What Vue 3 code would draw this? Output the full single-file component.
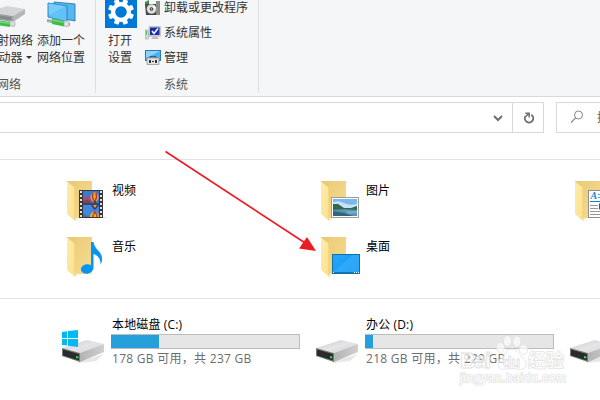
<template>
  <div class="explorer">
    <header class="ribbon">
      <section class="group network">
        <div class="buttons">
          <div class="big-button">
            <svg class="big-icon" viewBox="0 0 48 28">
              <path d="M3 12L22 6L40 9L28 16L8 13Z" fill="#d3d5d7" />
              <path d="M3 12L28 16V22L3 18Z" fill="#9a9da0" />
              <path d="M28 16L40 9V14L28 22Z" fill="#b3b6b8" />
              <path d="M5 14L26 17.500V20L5 16.500Z" fill="#808487" />
              <path d="M5 22.500L30 25" stroke="#a5a9aa" stroke-width="3" />
              <path d="M12 20L25 22V27L12 25Z" fill="#43bd50" />
              <path d="M12 21.500L25 23.500" stroke="#82dc86" stroke-width="1.200" />
              <rect x="25" y="21" width="5" height="5" rx="1" fill="#d5dbdc" stroke="#aaa" stroke-width=".5" />
            </svg>
            <span>映射网络</span>
            <span>驱动器<i class="caret"></i></span>
          </div>
          <div class="big-button">
            <svg class="big-icon" viewBox="0 0 48 28">
              <path d="M17 2L38 4V21L17 17Z" fill="#56b7ee" stroke="#237bb5" stroke-width=".9" />
              <path d="M11 3L30 6V22L11 17Z" fill="#62c2f8" stroke="#237ebb" stroke-width=".9" />
              <path d="M11.500 3.500L29 6L12 15Z" fill="#95daff" opacity=".45" />
              <path d="M10 20.500L33 24.500" stroke="#a0aaab" stroke-width="3" />
              <path d="M15 18.500L27 20.500V26.500L15 24Z" fill="#42ba4c" />
              <path d="M15.500 20L27 22.300" stroke="#7bd77e" stroke-width="1.300" />
              <rect x="27" y="21" width="5" height="5.500" rx="1" fill="#dce2e2" stroke="#9da5a6" stroke-width=".6" />
            </svg>
            <span>添加一个</span>
            <span>网络位置</span>
          </div>
        </div>
        <div class="group-title">网络</div>
      </section>

      <section class="group system">
        <div class="buttons">
          <div class="big-button settings">
            <svg class="settings-icon" viewBox="0 0 32 28">
              <rect width="32" height="28" fill="#0078d7" />
              <g transform="translate(16 12)" fill="#fff">
                <rect v-for="n in 8" :key="n" x="-2.500" y="-13" width="5" height="6" rx="1" :transform="`rotate(${n * 45 + 22.500})`" />
                <circle r="7.900" fill="none" stroke="#fff" stroke-width="4.200" />
              </g>
            </svg>
            <span>打开</span>
            <span>设置</span>
          </div>
          <ul class="commands">
            <li>
              <svg class="small-icon" viewBox="0 0 16 16">
                <path d="M0 2L4 0V5H0Z" fill="#3a8f50" />
                <path d="M0 4H12V15H1Z" fill="#444" />
                <path d="M11 1H15V15H11Z" fill="#8c8c8c" />
                <circle cx="6.500" cy="9" r="4.800" fill="#ddd" />
                <path d="M6.500 9L9 5L11 8Z" fill="#fff" />
                <circle cx="6.500" cy="9" r="1.800" fill="#333" />
                <circle cx="6.500" cy="9" r=".8" fill="#ddd" />
              </svg>
              卸载或更改程序
            </li>
            <li>
              <svg class="small-icon" viewBox="0 0 16 16">
                <rect x=".5" y="5" width="3" height="9" fill="#d5d9d9" stroke="#999" stroke-width=".5" />
                <rect x="1" y="6" width="1" height="4" fill="#45c743" />
                <rect x="4" y="1.500" width="11.500" height="10" fill="#ccc" stroke="#aaa" stroke-width=".5" />
                <rect x="5" y="2.500" width="9.500" height="7.500" fill="#1c2ca9" />
                <path d="M7 6L9 8.500L13 3.500" fill="none" stroke="#fff" stroke-width="1.500" />
                <path d="M8 12H12L14 14H6Z" fill="#bbb" />
              </svg>
              系统属性
            </li>
            <li>
              <svg class="small-icon" viewBox="0 0 16 16">
                <rect x=".5" y=".5" width="15" height="10" fill="#4bb2ef" stroke="#257eae" />
                <path d="M1 1H15L1 8Z" fill="#8bd3fb" />
                <path d="M5 8V6.500H11V8" fill="none" stroke="#555" />
                <path d="M2 8H14V14.500H2Z" fill="#e2e4e6" stroke="#888" stroke-width=".7" />
                <path d="M4 10H6V13H4ZM10 10H12V13H10ZM7 11H9V12H7Z" fill="#333" />
              </svg>
              管理
            </li>
          </ul>
        </div>
        <div class="group-title">系统</div>
      </section>
    </header>

    <nav class="toolbar">
      <div class="address">
        <div class="history">
          <svg width="12" height="8" viewBox="0 0 12 8"><path d="M2 2L6 6L10 2" fill="none" stroke="#707070" stroke-width="2" /></svg>
        </div>
        <div class="refresh">
          <svg width="12" height="12" viewBox="0 0 12 12">
            <path d="M2.400 4.200A4.200 4.200 0 1 0 8.200 2.700" fill="none" stroke="#707070" stroke-width="1.900" />
            <path d="M2.300 1.200H6.200V5.600M6 1.400L2.400 4.800" fill="none" stroke="#707070" stroke-width="1.500" />
          </svg>
        </div>
      </div>
      <div class="search">
        <svg width="14" height="14" viewBox="0 0 14 14">
          <circle cx="8.500" cy="5" r="4" fill="none" stroke="#85858c" />
          <path d="M5.700 7.800L1 12.500" stroke="#85858c" stroke-width="1.200" />
        </svg>
        <span>搜索</span>
      </div>
    </nav>

    <svg class="defs" width="0" height="0">
      <defs>
        <linearGradient id="flap" x1="0" x2="1" y2="1"><stop stop-color="#ffecaa" /><stop offset="1" stop-color="#fcdf90" /></linearGradient>
        <linearGradient id="back" x2="1" y2="1"><stop stop-color="#e8c973" /><stop offset="1" stop-color="#f8de93" /></linearGradient>
        <linearGradient id="screen" x2="1" y2="1"><stop stop-color="#22a8fc" /><stop offset="1" stop-color="#1595ec" /></linearGradient>
        <linearGradient id="diskTop" x2="1" y2="1"><stop stop-color="#c8c9cb" /><stop offset=".5" stop-color="#e5e5e7" /><stop offset="1" stop-color="#d4d4d6" /></linearGradient>
        <linearGradient id="diskSide" x2="1"><stop stop-color="#b1b2b4" /><stop offset="1" stop-color="#d0d0d2" /></linearGradient>
      </defs>
    </svg>

    <main>
      <section class="folders">
        <div v-for="folder in folders" :key="folder.name" class="folder">
          <svg class="folder-icon" viewBox="0 0 42 42">
            <path d="M0 0H25V37H7L0 30Z" fill="url(#back)" />
            <path d="M8 37L12 38L8 40Z" fill="#d9d9d9" opacity=".5" />
            <path d="M0 .5L8 7V40L0 33Z" fill="url(#flap)" />
            <path d="M7.700 7V39" stroke="#f1ce74" stroke-width=".7" />
            <g v-if="folder.type === 'video'" transform="translate(0 -1)">
              <path d="M36 37L40 38H36Z" fill="#ccc" />
              <rect x="12" y="10" width="24" height="28" fill="#373737" />
              <rect x="16" y="11" width="16" height="12.500" fill="#3a78d4" />
              <rect x="16" y="24.500" width="16" height="12.500" fill="#4187dd" />
              <path d="M16 19L20 16L24 20V23H16Z" fill="#bd4650" />
              <path d="M16 21L21 20L25 23.500H16Z" fill="#684570" />
              <ellipse cx="27.500" cy="17" rx="4" ry="4.500" fill="#edae16" />
              <path d="M26 13Q24.500 17 27 21M29 13Q30.500 17 28 21" fill="none" stroke="#b62f32" stroke-width="1.300" />
              <path d="M27 21H29V23H27Z" fill="#633" />
              <path d="M24 25H32L28.500 29.500H27Z" fill="#40337d" />
              <path d="M26 25H30L28 28Z" fill="#e9a21b" />
              <path d="M23 37Q23 32 27.500 32T32 37Z" fill="#edb019" />
              <path d="M26 37Q26 34 28 32Q30 34 30 37" fill="none" stroke="#c53b2f" stroke-width="1.500" />
              <path d="M16 34L23 37H16Z" fill="#54679e" />
              <path d="M16 24H32" stroke="#373737" />
              <path d="M14 11V37M34 11V37" stroke="#e2e2e2" stroke-width="2" stroke-dasharray="2 2" />
            </g>
            <g v-else-if="folder.type === 'picture'" transform="translate(0 -1)">
              <rect x="10.500" y="17.500" width="27" height="20" fill="#fff" stroke="#9b9b9b" />
              <rect x="12" y="19" width="24" height="17" fill="#79b7ec" />
              <path d="M12 22Q18 20 23 23T36 24V29H12Z" fill="#c6e3f6" />
              <path d="M12 24L17 24L23 28L30 28L36 26V31H12Z" fill="#31684f" />
              <path d="M12 30L24 29L36 30V36H12Z" fill="#5992b6" />
              <path d="M12 31L23 33L32 36H12Z" fill="#326579" />
              <path d="M24 31H36V33L28 34Z" fill="#8cbbd2" opacity=".6" />
            </g>
            <g v-else-if="folder.type === 'document'" transform="translate(0 -1)">
              <rect x="13.500" y="10.500" width="26" height="27" fill="#fff" stroke="#8f8f8f" />
              <text x="15.500" y="19" class="letter">A</text>
              <path d="M23 14.500H38M23 17.500H38" stroke="#4ba3d5" />
              <path d="M15 21.500H38" stroke="#0789cf" />
              <path d="M15 25.500H23M15 28.500H23M15 31.500H38M15 34.500H38" stroke="#999" />
              <rect x="24" y="23.500" width="12" height="6" fill="#355a78" />
            </g>
            <g v-else-if="folder.type === 'music'">
              <ellipse cx="20" cy="32" rx="6.200" ry="4.700" fill="#0795f4" transform="rotate(-10 20 32)" />
              <path d="M24 5H26.500C28 14 36 14 35 24L33.500 28C34 21 30 18 26.500 17V32H24Z" fill="#0795f4" />
            </g>
            <g v-else transform="translate(0 -1)">
              <rect x="11.500" y="18.500" width="27" height="19" fill="url(#screen)" stroke="#136fa9" />
              <path d="M12 36L32 19H38V36Z" fill="#48b4ff" opacity=".45" />
              <path d="M12 36.500H38" stroke="#0d78b8" />
              <path d="M12 36.500H13M33 36.500H34M35 36.500H36M37 36.500H38" stroke="#fff" />
            </g>
          </svg>
          <span>{{ folder.name }}</span>
        </div>
      </section>

      <section class="drives">
        <div v-for="drive in drives" :key="drive.name" class="drive">
          <svg class="drive-icon" viewBox="0 0 44 34">
            <path d="M4 28L15 32L42 24L34 31L17 33Z" fill="#bbb" opacity=".35" />
            <path d="M0 18L25 10L42 14L18 23Z" fill="url(#diskTop)" />
            <path d="M18 23L42 14V22L18 32Z" fill="url(#diskSide)" />
            <path d="M0 18L18 23V32L0 26Z" fill="#77797b" />
            <path d="M1 19.500L17 24V30.500L1 25.500Z" fill="#292b2c" />
            <path d="M14 26L16.300 26.500V28.500L14 28Z" fill="#38e43c" />
            <g v-if="drive.system" fill="#00b9f1">
              <path d="M0 2L5 1.300V8H0ZM6 1.100L16 0V8H6ZM0 9H5V15.500L0 15ZM6 9H16V17L6 15.700Z" />
            </g>
          </svg>
          <div class="drive-info">
            <div class="drive-name">{{ drive.name }}</div>
            <div class="capacity"><div class="used" :style="{ width: drive.used + 'px' }"></div></div>
            <div class="free">{{ drive.free }} GB 可用，共 {{ drive.total }} GB</div>
          </div>
        </div>
      </section>
    </main>

    <svg class="overlay" viewBox="0 0 600 400">
      <path d="M165.500 151.500L306 243.500" stroke="#ed1c24" stroke-width="1.700" />
      <path d="M307 237L316 251L299 248.500Z" fill="#ed1c24" />
      <g class="watermark">
        <text x="460" y="368" class="brand" textLength="31">Bai</text>
        <ellipse cx="500.500" cy="347.500" rx="4" ry="5" />
        <ellipse cx="507.500" cy="341" rx="4" ry="5.500" />
        <ellipse cx="517" cy="341.500" rx="4" ry="5.500" />
        <ellipse cx="523.500" cy="349.500" rx="4" ry="5" />
        <path d="M512 349C506 349 506 355 501 358C495 364 499 371 506 369Q512 368 518 369C526 371 529 364 523 358C518 354 518 349 512 349Z" />
        <text x="503" y="367" class="paw-text" textLength="17">du</text>
        <text x="528" y="367" class="cn" textLength="36">经验</text>
        <text x="460" y="382" class="url" textLength="106">jingyan.baidu.com</text>
      </g>
    </svg>
  </div>
</template>

<script setup>
const folders = [
  { name: '视频', type: 'video' },
  { name: '图片', type: 'picture' },
  { name: '文档', type: 'document' },
  { name: '音乐', type: 'music' },
  { name: '桌面', type: 'desktop' }
]

const drives = [
  { name: '本地磁盘 (C:)', free: 178, total: 237, used: 48, system: true },
  { name: '办公 (D:)', free: 218, total: 229, used: 8 },
  { name: '软件 (E:)', free: 200, total: 229, used: 24 }
]
</script>

<style>
body {
  overflow: hidden;
}
</style>

<style scoped>
.explorer {
  position: relative;
  width: 600px;
  height: 400px;
  overflow: hidden;
  background: #fff;
  color: #000;
  font: 12px/17px "Open Sans", "Noto Sans CJK SC", sans-serif;
}

.explorer svg {
  flex-shrink: 0;
}

.ribbon {
  display: flex;
  height: 96px;
  background: #f5f6f7;
  border-bottom: 1px solid #d8d9da;
  color: #333;
}

.group {
  height: 93px;
  box-sizing: border-box;
  border-right: 1px solid #dedfe0;
}

.network {
  width: 96px;
}

.system {
  width: 163px;
}

.buttons {
  display: flex;
  height: 76px;
}

.network .buttons {
  margin-left: -17px;
}

.big-button {
  display: flex;
  flex-direction: column;
  align-items: center;
  width: 52px;
  flex-shrink: 0;
  white-space: nowrap;
}

.big-icon {
  width: 48px;
  height: 28px;
  margin-bottom: 4px;
}

.caret {
  display: inline-block;
  margin: 0 0 3px 3px;
  border: 3px solid transparent;
  border-top-color: #333;
  border-bottom: 0;
}

.settings {
  width: 32px;
  margin-left: 9px;
}

.settings span {
  margin-left: -2px;
}

.settings-icon {
  width: 32px;
  height: 28px;
  margin-bottom: 4px;
}

.group-title {
  text-align: center;
  color: #555;
}

.system .group-title {
  padding-right: 2px;
}

.network .group-title {
  width: 18px;
  direction: rtl;
  white-space: nowrap;
  margin-left: 3px;
}

.commands {
  list-style: none;
  margin: -5px 0 0 8px;
  padding: 0;
}

.commands li {
  display: flex;
  align-items: center;
  gap: 3px;
  height: 25px;
  white-space: nowrap;
}

.small-icon {
  width: 16px;
  height: 16px;
}

.toolbar {
  display: flex;
  justify-content: space-between;
  height: 63px;
  box-sizing: border-box;
  padding-top: 5px;
  border-bottom: 1px solid #e2e2e2;
}

.address,
.search {
  display: flex;
  box-sizing: border-box;
  height: 31px;
  border: 1px solid #d9d9d9;
}

.address {
  width: 544px;
  border-left: 0;
}

.history {
  display: flex;
  flex: 1;
  align-items: center;
  justify-content: flex-end;
  padding-right: 8px;
}

.refresh {
  display: flex;
  align-items: center;
  justify-content: center;
  width: 31px;
  padding-left: 2px;
  box-sizing: border-box;
  border-left: 1px solid #d9d9d9;
}

.search {
  width: 44px;
  align-items: center;
  gap: 13px;
  padding-left: 13px;
  border-right: 0;
  overflow: hidden;
  color: #666;
  white-space: nowrap;
}

.search svg {
  margin-bottom: 2px;
}

.defs {
  position: absolute;
}

.folders {
  display: grid;
  grid-template-columns: repeat(3, 254px);
  grid-auto-rows: 56px;
  height: 139px;
  box-sizing: border-box;
  padding: 21px 0 0 67px;
  border-bottom: 1px solid #e5e5e5;
}

.folder {
  display: flex;
  gap: 3px;
}

.folder span {
  margin-top: 1px;
}

.folder-icon {
  width: 42px;
  height: 42px;
}

.letter {
  font: italic bold 10px "Liberation Serif", serif;
  fill: #1689c9;
}

.drives {
  display: grid;
  grid-template-columns: repeat(3, 254px);
  padding: 17px 0 0 62px;
}

.drive {
  display: flex;
  gap: 5px;
}

.drive-icon {
  width: 44px;
  height: 34px;
  margin-top: 14px;
}

.drive-info {
  width: 189px;
}

.drive-name,
.free {
  padding-left: 1px;
  white-space: nowrap;
}

.drive-name {
  height: 18px;
  letter-spacing: .15px;
}

.capacity {
  height: 15px;
  box-sizing: border-box;
  border: 1px solid #bcbcbc;
  background: #e6e6e6;
}

.used {
  height: 13px;
  margin-left: -1px;
  background: #26a0da;
}

.free {
  margin-top: 1px;
  color: #6d6d6d;
  letter-spacing: .28px;
}

/* 箭头和水印覆盖在窗口内容之上 */
.overlay {
  position: absolute;
  top: 0;
  left: 0;
  width: 600px;
  height: 400px;
}

.watermark {
  fill: #fff;
  fill-opacity: .65;
  stroke: #e0e0e0;
  stroke-width: .8;
}

.brand {
  font: bold 22px "Liberation Sans", sans-serif;
}

.paw-text {
  font: bold 14px "Liberation Sans", sans-serif;
}

.watermark .cn,
.watermark .url {
  paint-order: stroke;
  stroke: #e4e4e4;
  stroke-width: 1.5;
  fill-opacity: .9;
}

.cn {
  font: 500 18px "Noto Sans CJK SC", sans-serif;
}

.url {
  font: 12px "Liberation Sans", sans-serif;
}
</style>
